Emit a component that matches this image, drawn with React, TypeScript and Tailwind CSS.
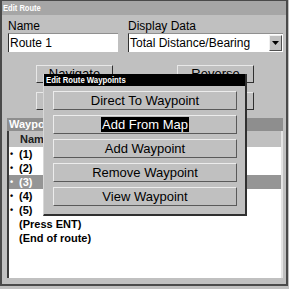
const rows = [
  { label: '(1)', bullet: true },
  { label: '(2)', bullet: true },
  { label: '(3)', bullet: true, selected: true },
  { label: '(4)', bullet: true },
  { label: '(5)', bullet: true },
  { label: '(Press ENT)', bullet: false },
  { label: '(End of route)', bullet: false },
];

const menu = ['Direct To Waypoint', 'Add From Map', 'Add Waypoint', 'Remove Waypoint', 'View Waypoint'];

function PanelButton({ label }: { label: string }) {
  return (
    <div className="w-[77px] h-[18px] flex items-center justify-center text-[13px] text-black border border-t-[#e8e8e8] border-l-[#e8e8e8] border-r-[#303030] border-b-[#303030]">
      {label}
    </div>
  );
}

export default function App() {
  return (
    <div className="w-[289px] h-[289px] bg-[#c0c0c0] font-['Liberation_Sans',Arial,sans-serif] text-black">
      <div className="relative w-[288px] h-[286px] flex flex-col border-t border-l-2 border-r-2 border-b-2 border-[#4a4a4a]">
        {/* title bar */}
        <div className="h-[14px] bg-[#a6a6a6] text-white font-bold text-[9px] leading-[14px] pl-[1px] overflow-hidden">
          <span className="inline-block origin-left scale-x-[0.84]">Edit Route</span>
        </div>

        {/* name / display data */}
        <div className="grid grid-cols-[110px_155px] gap-x-[10px] pl-[6px] pt-[5px]">
          <div>
            <div className="text-[12px] leading-[13px]">Name</div>
            <div className="h-[19px] bg-white border-l border-t border-l-[#303030] border-t-[#909090] text-[12px] pl-[1px] flex items-center">
              Route 1
            </div>
          </div>
          <div>
            <div className="text-[12px] leading-[13px]">Display Data</div>
            <div className="h-[19px] bg-white border-l border-t border-l-[#303030] border-t-[#909090] text-[12px] pl-[1px] pr-[1px] flex items-center">
              <span className="flex-1 whitespace-nowrap">Total Distance/Bearing</span>
              <div className="w-[13px] h-[16px] bg-[#c0c0c0] border border-t-[#f0f0f0] border-l-[#f0f0f0] border-r-[#505050] border-b-[#505050] flex items-center justify-center">
                <svg width="7" height="4" viewBox="0 0 7 4">
                  <path d="M0 0 H7 L3.5 4 Z" fill="#000" />
                </svg>
              </div>
            </div>
          </div>
        </div>

        {/* action buttons */}
        <div className="flex flex-col gap-[9px] pl-[34px] mt-[13px]">
          <div className="flex gap-[64px]">
            <PanelButton label="Navigate" />
            <PanelButton label="Reverse" />
          </div>
          <div className="flex gap-[64px]">
            <PanelButton label="Edit" />
            <PanelButton label="Delete" />
          </div>
        </div>

        {/* waypoints list */}
        <div className="ml-[5px] mr-[3px] mt-[8px] flex flex-col">
          <div className="h-[13px] bg-[#8e8e8e] text-white font-bold text-[11px] leading-[13px] pl-[2px]">
            Waypoints
          </div>
          <div className="h-[147px] flex flex-col border-l-2 border-l-[#3a3a3a] border-r-2 border-r-[#e4e4e4]">
            <div className="h-[16px] font-bold text-[11px] leading-[16px] pl-[11px] text-[#202020]">Name</div>
            <div className="flex-1 bg-white">
              {rows.map((r) => (
                <div
                  key={r.label}
                  className={`h-[14px] flex items-center text-[11px] font-bold leading-[14px] ${r.selected ? 'bg-[#959595] text-white' : 'text-black'}`}
                >
                  <span className="w-[10px] pl-[1px] text-[9px]">{r.bullet ? '•' : ''}</span>
                  <span>{r.label}</span>
                </div>
              ))}
            </div>
          </div>
        </div>

        {/* edit route waypoints popup */}
        <div className="absolute left-[41px] top-[73px] w-[204px] bg-[#c0c0c0] border-l border-l-[#d8d8d8] border-r-2 border-b-2 border-r-[#303030] border-b-[#303030] pb-[8px]">
          <div className="h-[12px] bg-black text-white font-bold text-[9px] leading-[12px] pl-[2px] overflow-hidden">
            <span className="inline-block origin-left scale-x-[0.86]">Edit Route Waypoints</span>
          </div>
          <div className="flex flex-col gap-[5px] pl-[9px] pt-[5px]">
            {menu.map((m) => (
              <div
                key={m}
                className="w-[184px] h-[19px] flex items-center justify-center text-[13px] border border-t-[#ececec] border-l-[#ececec] border-r-[#5a5a5a] border-b-[#5a5a5a]"
              >
                {m === 'Add From Map' ? <span className="bg-black text-white px-[1px] leading-[15px]">{m}</span> : m}
              </div>
            ))}
          </div>
        </div>
      </div>
    </div>
  );
}
